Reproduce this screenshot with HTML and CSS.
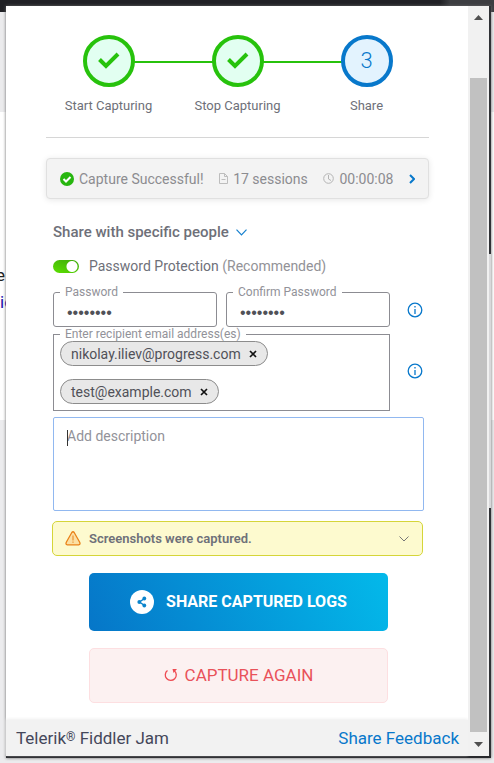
FILE: index.html
```html
<!DOCTYPE html>
<html lang="en">
<head>
<meta charset="utf-8">
<meta name="viewport" content="width=device-width, initial-scale=1">
<title>Telerik Fiddler Jam</title>
<link rel="stylesheet" href="styles.css">
</head>
<body>
<div class="backdrop" aria-hidden="true">
  <div class="tabstrip"></div>
  <div class="page-top"></div>
  <div class="page-body"><span>e</span><span class="visited">io</span></div>
</div>
<div class="popup">
  <div class="panel">
    <main class="content">
      <ol class="steps">
        <li class="step done">
          <span class="circle"><svg width="24" height="20" viewBox="0 0 24 20"><path d="M2.500 8.500 9 15 21 3" fill="none" stroke="#27c20c" stroke-width="4"/></svg></span>
          <span>Start Capturing</span>
        </li>
        <li class="step done">
          <span class="circle"><svg width="24" height="20" viewBox="0 0 24 20"><path d="M2.500 8.500 9 15 21 3" fill="none" stroke="#27c20c" stroke-width="4"/></svg></span>
          <span>Stop Capturing</span>
        </li>
        <li class="step current">
          <span class="circle">3</span>
          <span>Share</span>
        </li>
      </ol>
      <button class="summary" type="button">
        <svg width="14" height="14" viewBox="0 0 14 14"><circle cx="7" cy="7" r="7" fill="#27b60f"/><path d="m3.500 7 2.500 2.500 4.500-4.500" fill="none" stroke="#fff" stroke-width="2"/></svg>
        <span class="status">Capture Successful!</span>
        <svg width="9" height="11" viewBox="0 0 9 11" fill="none" stroke="#bdbdbd"><path d="M.5.500h5l3 3v7h-8zM5.500.500v3h3M2.500 6.500h4"/></svg>
        <span class="sessions">17 sessions</span>
        <svg width="11" height="11" viewBox="0 0 11 11" fill="none" stroke="#b4b4b4"><circle cx="5.500" cy="5.500" r="4.800"/><path d="M5.500 2v4l2.500 1.500"/></svg>
        <span class="time">00:00:08</span>
        <svg width="6" height="10" viewBox="0 0 6 10"><path d="m1 1 4 4-4 4" fill="none" stroke="#0878cb" stroke-width="2"/></svg>
      </button>
      <form class="share">
        <h2 class="heading">Share with specific people
          <svg width="11" height="7" viewBox="0 0 11 7"><path d="m.5.700 5 5.300 5-5.300" fill="none" stroke="#1680cf" stroke-width="1.200"/></svg>
        </h2>
        <label class="protect"><input class="toggle" type="checkbox" checked><span>Password Protection <small>(Recommended)</small></span></label>
        <div class="row">
          <div class="pair">
            <fieldset class="field"><legend><label for="pw">Password</label></legend><input id="pw" type="password" value="abcdefgh"></fieldset>
            <fieldset class="field"><legend><label for="pw2">Confirm Password</label></legend><input id="pw2" type="password" value="abcdefgh"></fieldset>
          </div>
          <button class="info" type="button" aria-label="Password help"><svg width="16" height="16" viewBox="0 0 16 16"><circle cx="8" cy="8" r="6.800" fill="none" stroke="#0878cb" stroke-width="1.300"/><path d="M8 7v5M8 4v1.500" stroke="#0878cb" stroke-width="1.300"/></svg></button>
        </div>
        <div class="row">
          <fieldset class="field emails">
            <legend><label for="mail">Enter recipient email address(es)</label></legend>
            <div class="chips">
              <span class="chip">nikolay.iliev@progress.com<button type="button" aria-label="Remove nikolay.iliev@progress.com"><svg width="8" height="8" viewBox="0 0 8 8"><path d="m1 1 6 6m0-6-6 6" stroke="#111" stroke-width="1.700"/></svg></button></span>
              <span class="chip">test@example.com<button type="button" aria-label="Remove test@example.com"><svg width="8" height="8" viewBox="0 0 8 8"><path d="m1 1 6 6m0-6-6 6" stroke="#111" stroke-width="1.700"/></svg></button></span>
              <input id="mail" type="email">
            </div>
          </fieldset>
          <button class="info" type="button" aria-label="Recipient help"><svg width="16" height="16" viewBox="0 0 16 16"><circle cx="8" cy="8" r="6.800" fill="none" stroke="#0878cb" stroke-width="1.300"/><path d="M8 7v5M8 4v1.500" stroke="#0878cb" stroke-width="1.300"/></svg></button>
        </div>
        <div class="description">
          <textarea aria-label="Description" placeholder="Add description"></textarea>
          <span class="caret" aria-hidden="true"></span>
        </div>
        <button class="notice" type="button">
          <svg width="16" height="15" viewBox="0 0 16 15"><path d="M6.800 1.500q1.200-1.500 2.400 0l5.500 9.800q1 2.300-1 2.500H2.300q-2-.2-1-2.500z" fill="#fbe0a4" stroke="#e98218" stroke-width="1.300"/><path d="M8 4.500v5M8 10.500v1.300" stroke="#e98218"/></svg>
          <span>Screenshots were captured.</span>
          <svg width="10" height="6" viewBox="0 0 10 6"><path d="m.5.500 4.500 4.500 4.500-4.500" fill="none" stroke="#777"/></svg>
        </button>
        <button class="action primary" type="button">
          <svg width="24" height="24" viewBox="0 0 24 24"><circle cx="12" cy="12" r="12" fill="#fff"/><path d="m14.500 8.500-5 3.500 5 3.500" fill="none" stroke="#0a84cc" stroke-width="1.500"/><g fill="#0a84cc"><circle cx="14.300" cy="8.500" r="1.900"/><circle cx="9.300" cy="12" r="1.900"/><circle cx="14.300" cy="15.500" r="1.900"/></g></svg>
          SHARE CAPTURED LOGS
        </button>
        <button class="action again" type="button">
          <svg width="14" height="14" viewBox="0 0 14 14"><path d="M3.500 2.500a5.500 5.500 0 1 0 6.800.2" fill="none" stroke="#ee4b52" stroke-width="1.300"/><path d="M8.500 1h4.500l-3.500 4z" fill="#ee4b52"/></svg>
          CAPTURE AGAIN
        </button>
      </form>
    </main>
    <footer class="footer"><span>Telerik<sup>®</sup> Fiddler Jam</span><a href="#feedback">Share Feedback</a></footer>
  </div>
  <div class="scrollbar" aria-hidden="true">
    <svg width="9" height="5" viewBox="0 0 9 5"><path d="M0 5 4.500 0 9 5z" fill="#505050"/></svg>
    <div class="thumb"></div>
    <svg width="9" height="5" viewBox="0 0 9 5"><path d="M0 0 4.500 5 9 0z" fill="#505050"/></svg>
  </div>
</div>
</body>
</html>
```
FILE: styles.css
```css
* { box-sizing: border-box; }
body {
  margin: 0;
  min-height: 100vh;
  padding: 6px 3px 5px 6px;
  display: flex;
  background: #ececee;
  color: #6e7079;
  font: 14px/20px Roboto, "Liberation Sans", sans-serif;
}
button, input, textarea { font: inherit; color: inherit; }
button { cursor: pointer; }
svg { display: block; flex: none; }

.backdrop { position: absolute; inset: 0; overflow: hidden; z-index: -1; }
.tabstrip { height: 12px; background: linear-gradient(90deg, #202125 440px, #3c3d41 450px); }
.page-top { height: 100px; background: #ebebed; }
.page-body {
  height: 308px;
  padding-top: 150px;
  background: #fff;
  color: #222;
  font-size: 17px;
  line-height: 27px;
}
.page-body span { display: block; margin-left: -4px; }
.page-body .visited { margin-left: 0; color: #1a0dab; }

/* The strip on the right shows the dark window edge above and below a light stretch. */
.popup {
  flex: 1;
  min-width: 0;
  display: flex;
  padding-right: 2px;
  background: linear-gradient(#303236 33%, #d8d8da 33%, #d8d8da 67%, #303236 67%);
  border-bottom: 2px solid #27282c;
  box-shadow: 0 0 3px #666;
}
.panel { flex: 1; min-width: 0; display: flex; flex-direction: column; background: #fff; }
.content { flex: 1; padding: 29px 39px 17px 40px; }

.steps {
  list-style: none;
  display: flex;
  justify-content: center;
  margin: 0 0 20px;
  padding: 0 0 21px;
  border-bottom: 1px solid #d6d6d6;
}
.step {
  position: relative;
  flex: none;
  width: 129px;
  display: flex;
  flex-direction: column;
  align-items: center;
  gap: 9px;
  font-size: 13px;
}
.step + .step::before {
  content: "";
  position: absolute;
  top: 26px;
  right: 50%;
  width: 100%;
  height: 2px;
  background: #27c20c;
}
.step > span { z-index: 1; }
.circle {
  position: relative;
  width: 52px;
  height: 52px;
  display: grid;
  place-items: center;
  border: 4px solid #27c20c;
  border-radius: 50%;
  background: #e2fff1;
}
.step .circle { z-index: 2; }
.current .circle {
  border-color: #0878cb;
  background: #e3f3fe;
  color: #0878cb;
  font-size: 22px;
  font-weight: 300;
}

.summary {
  width: 100%;
  height: 41px;
  display: flex;
  align-items: center;
  padding: 0 13px;
  border: 1px solid #e0e0e0;
  border-radius: 4px;
  background: #f3f3f3;
  box-shadow: 0 1px 6px #e7e7e7;
  color: #8c8c90;
}
.status, .sessions, .time { margin: 0 auto 0 5px; }

.share { padding: 23px 5px 0 7px; }
.heading {
  display: flex;
  align-items: center;
  gap: 7px;
  margin: 0 0 14px;
  font-size: 15px;
  line-height: 20px;
  font-weight: 500;
}
.protect { display: flex; align-items: center; gap: 10px; margin-bottom: 9px; }
.protect small { font-size: inherit; color: #929297; }
.toggle {
  appearance: none;
  width: 26px;
  height: 13px;
  margin: 0;
  border-radius: 7px;
  background: radial-gradient(circle at 19px 50%, #fff 5px, transparent 6px), linear-gradient(20deg, #5ce000, #3fa90d);
}
.row { display: flex; align-items: center; gap: 17px; padding-right: 1px; }
.pair { flex: 1; display: flex; gap: 9px; }
.field {
  flex: 1;
  min-width: 0;
  margin: 0;
  padding: 0 12px;
  border: 1px solid #8c8c92;
  border-radius: 3px;
}
.field legend {
  height: 14px;
  margin-left: -6px;
  padding: 0 5px;
  color: #929299;
  font-size: 12px;
  line-height: 14px;
}
.field input {
  display: block;
  width: 100%;
  height: 27px;
  padding: 0 1px;
  border: 0;
  outline: 0;
  background: none;
  color: #505158;
}
.field input[type="password"] { height: 27px; font: 16px "Liberation Sans", sans-serif; }
.row .emails { padding: 0 6px 6px; border-radius: 0; }
.emails legend { margin-left: 0; }
.chips { display: flex; flex-wrap: wrap; gap: 13px 20px; }
.chip {
  height: 25px;
  display: flex;
  align-items: center;
  gap: 8px;
  padding: 0 10px;
  border: 1px solid #8c8c8c;
  border-radius: 13px;
  background: #e8e8e8;
  color: #505158;
}
.chip:first-child { margin-right: 60px; }
.chip button { padding: 0; border: 0; background: none; }
.chips input { flex: 1; width: 60px; height: 25px; }
.info { flex: none; margin-top: 4px; padding: 0; border: 0; background: none; }
.pair + .info { margin-top: 8px; }

.description { position: relative; margin-top: 6px; }
.description textarea {
  display: block;
  width: 100%;
  height: 94px;
  padding: 8px 13px;
  border: 1px solid #91b8f0;
  border-radius: 2px;
  outline: 0;
  resize: none;
}
.description textarea::placeholder { color: #929299; }
.caret { position: absolute; left: 14px; top: 13px; width: 1px; height: 16px; background: #333; }

.notice {
  width: 100%;
  height: 35px;
  display: flex;
  align-items: center;
  gap: 8px;
  margin: 10px 0 17px -1px;
  padding: 0 13px 0 12px;
  border: 1px solid #d5d539;
  border-radius: 5px;
  background: #fdfacf;
  font-size: 13px;
  font-weight: 600;
}
.notice svg:last-child { margin-left: auto; }

.action {
  width: calc(100% - 72px);
  display: flex;
  align-items: center;
  justify-content: center;
  margin: 0 auto;
  border-radius: 5px;
}
.primary {
  height: 58px;
  gap: 12px;
  padding-bottom: 2px;
  border: 0;
  background: linear-gradient(65deg, #0676c8, #03b9ea);
  color: #fff;
  font-size: 16px;
  font-weight: 700;
}
.again {
  height: 55px;
  gap: 7px;
  margin-top: 17px;
  padding-bottom: 3px;
  border: 1px solid #fddfe1;
  background: #fcf1f1;
  color: #e9525a;
  font-size: 17px;
}

.footer {
  height: 36px;
  display: flex;
  align-items: center;
  justify-content: space-between;
  padding: 0 9px 0 10px;
  background: #f2f2f2;
  box-shadow: 0 -1px 3px #eee;
  color: #44475a;
  font-size: 17px;
}
.footer sup { font-size: 12px; line-height: 1; vertical-align: 3px; }
.footer a { color: #0878cb; text-decoration: none; }

.scrollbar {
  width: 21px;
  display: flex;
  flex-direction: column;
  align-items: center;
  padding: 9px 0;
  background: #f1f1f1;
}
.thumb { flex: 1; width: 17px; margin: 58px 0 10px; background: #c1c1c1; }
```
